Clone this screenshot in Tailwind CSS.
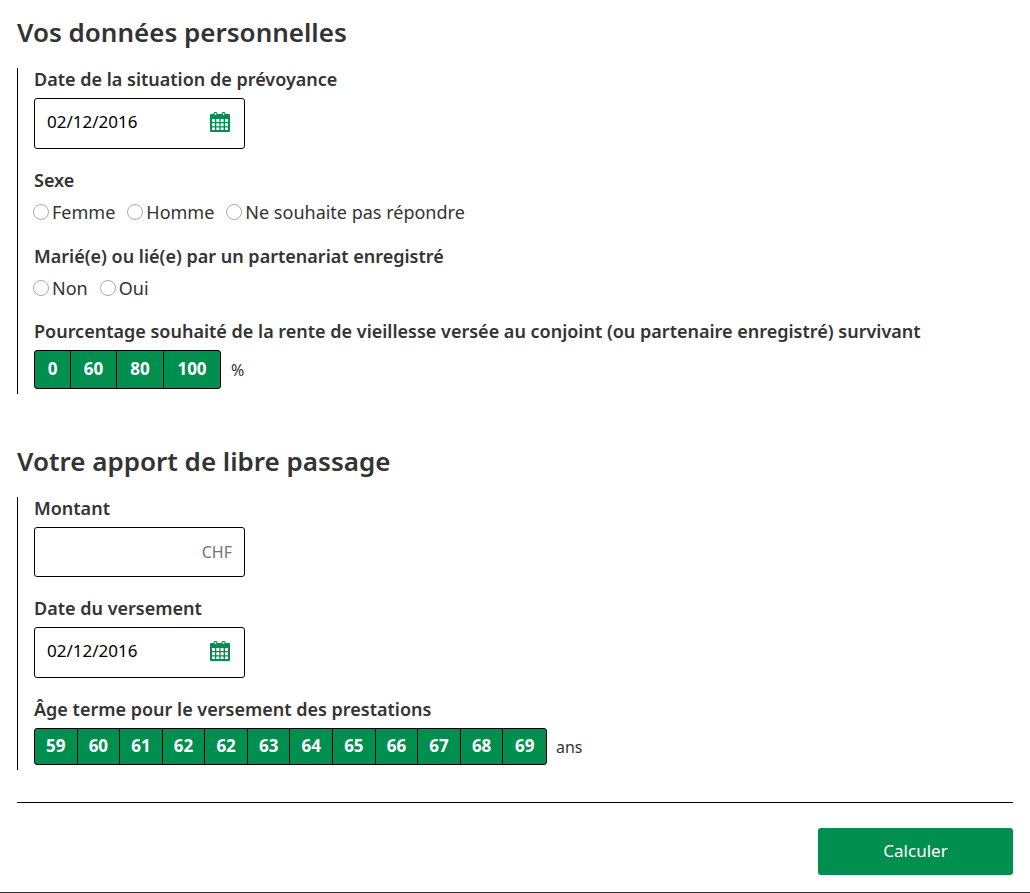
<!DOCTYPE html>
<html lang="fr">
<head>
<meta charset="utf-8">
<meta name="viewport" content="width=device-width, initial-scale=1">
<title>Calculateur de prévoyance</title>
<script src="https://cdn.jsdelivr.net/npm/@tailwindcss/browser@4"></script>
</head>
<body class="bg-white font-['Noto_Sans',sans-serif] text-[17px] leading-[22px] text-[#333333]">
<svg class="hidden" aria-hidden="true">
  <symbol id="calendar" viewBox="0 0 20 20">
    <path fill="#008f4f" fill-rule="evenodd" d="M1 2H3.500V1.500Q3.500 0 5 0H6Q7.500 0 7.500 1.500V2H11.500V1.500Q11.500 0 13 0H14Q15.500 0 15.500 1.500V2H19Q20 2 20 3V19Q20 20 19 20H1Q0 20 0 19V3Q0 2 1 2ZM4.700 1.200V3H6.300V1.200ZM12.700 1.200V3H14.300V1.200ZM2 7V10H5V7ZM6.300 7V10H9.300V7ZM10.600 7V10H13.600V7ZM15 7V10H18V7ZM2 11.300V14.300H5V11.300ZM6.300 11.300V14.300H9.300V11.300ZM10.600 11.300V14.300H13.600V11.300ZM15 11.300V14.300H18V11.300ZM2 15.600V18H5V15.600ZM6.300 15.600V18H9.300V15.600ZM10.600 15.600V18H13.600V15.600ZM15 15.600V18H18V15.600Z"/>
  </symbol>
</svg>
<form class="border-b border-[#333333] px-[17px] pt-3 pb-[17px]" onsubmit="return false">
  <section>
    <h2 class="text-[26px] leading-10 font-semibold">Vos données personnelles</h2>
    <div class="mt-4 flex flex-col gap-5 border-l border-black pb-[5px] pl-4">
      <div class="flex flex-col items-start gap-2">
        <label for="situation" class="text-[18px] font-semibold">Date de la situation de prévoyance</label>
        <div class="flex h-[51px] w-[211px] items-center rounded-[3px] border border-black pr-[14px] pb-[3px] pl-3">
          <input id="situation" type="text" value="02/12/2016" class="min-w-0 flex-1 text-[17px] text-black outline-none">
          <button type="button" aria-label="Choisir une date"><svg class="size-5"><use href="#calendar"/></svg></button>
        </div>
      </div>
      <fieldset>
        <legend class="text-[18px] font-semibold">Sexe</legend>
        <div class="mt-2 flex h-[26px] flex-wrap items-center gap-x-3 text-[18px]">
          <label class="-ml-px flex items-center gap-[3px]"><input type="radio" name="sexe" class="size-4 appearance-none rounded-full border border-[#aaaaaa] checked:border-[5px] checked:border-[#008f4f]">Femme</label>
          <label class="flex items-center gap-[3px]"><input type="radio" name="sexe" class="size-4 appearance-none rounded-full border border-[#aaaaaa] checked:border-[5px] checked:border-[#008f4f]">Homme</label>
          <label class="flex items-center gap-[3px]"><input type="radio" name="sexe" class="size-4 appearance-none rounded-full border border-[#aaaaaa] checked:border-[5px] checked:border-[#008f4f]">Ne souhaite pas répondre</label>
        </div>
      </fieldset>
      <fieldset>
        <legend class="text-[18px] font-semibold">Marié(e) ou lié(e) par un partenariat enregistré</legend>
        <div class="mt-2 flex h-[25px] flex-wrap items-center gap-x-3 text-[18px]">
          <label class="-ml-px flex items-center gap-[3px]"><input type="radio" name="marie" class="size-4 appearance-none rounded-full border border-[#aaaaaa] checked:border-[5px] checked:border-[#008f4f]">Non</label>
          <label class="flex items-center gap-[3px]"><input type="radio" name="marie" class="size-4 appearance-none rounded-full border border-[#aaaaaa] checked:border-[5px] checked:border-[#008f4f]">Oui</label>
        </div>
      </fieldset>
      <fieldset>
        <legend class="text-[18px] font-semibold">Pourcentage souhaité de la rente de vieillesse versée au conjoint (ou partenaire enregistré) survivant</legend>
        <div class="mt-2 flex items-center gap-[10px]">
          <div class="flex h-[39px] divide-x divide-black overflow-hidden rounded-[3px] border border-black bg-[#008f4f] font-bold text-white">
            <button type="button" class="w-9 pb-[2px]">0</button>
            <button type="button" class="w-[46px] pb-[2px]">60</button>
            <button type="button" class="w-[47px] pb-[2px]">80</button>
            <button type="button" class="w-14 pb-[2px]">100</button>
          </div>
          <span class="text-base">%</span>
        </div>
      </fieldset>
    </div>
  </section>

  <section class="mt-[47px]">
    <h2 class="text-[26px] leading-10 font-semibold">Votre apport de libre passage</h2>
    <div class="mt-4 flex flex-col gap-5 border-l border-black pb-[5px] pl-4">
      <div class="flex flex-col items-start gap-2">
        <label for="montant" class="text-[18px] font-semibold">Montant</label>
        <input id="montant" type="text" placeholder="CHF" class="h-[50px] w-[211px] rounded-[3px] border border-black px-3 text-right text-base text-black outline-none placeholder:text-[#757575]">
      </div>
      <div class="flex flex-col items-start gap-2">
        <label for="versement" class="text-[18px] font-semibold">Date du versement</label>
        <div class="flex h-[51px] w-[211px] items-center rounded-[3px] border border-black pr-[14px] pb-[3px] pl-3">
          <input id="versement" type="text" value="02/12/2016" class="min-w-0 flex-1 text-[17px] text-black outline-none">
          <button type="button" aria-label="Choisir une date"><svg class="size-5"><use href="#calendar"/></svg></button>
        </div>
      </div>
      <fieldset>
        <legend class="text-[18px] font-semibold">Âge terme pour le versement des prestations</legend>
        <div class="mt-2 flex items-center gap-[9px]">
          <div class="grid h-[37px] w-[513px] grid-cols-12 divide-x divide-black overflow-hidden rounded-[3px] border border-black bg-[#008f4f] font-bold text-white">
            <button type="button" class="pb-[2px]">59</button>
            <button type="button" class="pb-[2px]">60</button>
            <button type="button" class="pb-[2px]">61</button>
            <button type="button" class="pb-[2px]">62</button>
            <button type="button" class="pb-[2px]">62</button>
            <button type="button" class="pb-[2px]">63</button>
            <button type="button" class="pb-[2px]">64</button>
            <button type="button" class="pb-[2px]">65</button>
            <button type="button" class="pb-[2px]">66</button>
            <button type="button" class="pb-[2px]">67</button>
            <button type="button" class="pb-[2px]">68</button>
            <button type="button" class="pb-[2px]">69</button>
          </div>
          <span class="text-base">ans</span>
        </div>
      </fieldset>
    </div>
  </section>

  <div class="mt-8 flex justify-end border-t border-black pt-[25px]">
    <button type="submit" class="h-[47px] w-[195px] rounded-[3px] bg-[#008f4f] pb-[2px] text-[17px] text-white">Calculer</button>
  </div>
</form>
</body>
</html>
